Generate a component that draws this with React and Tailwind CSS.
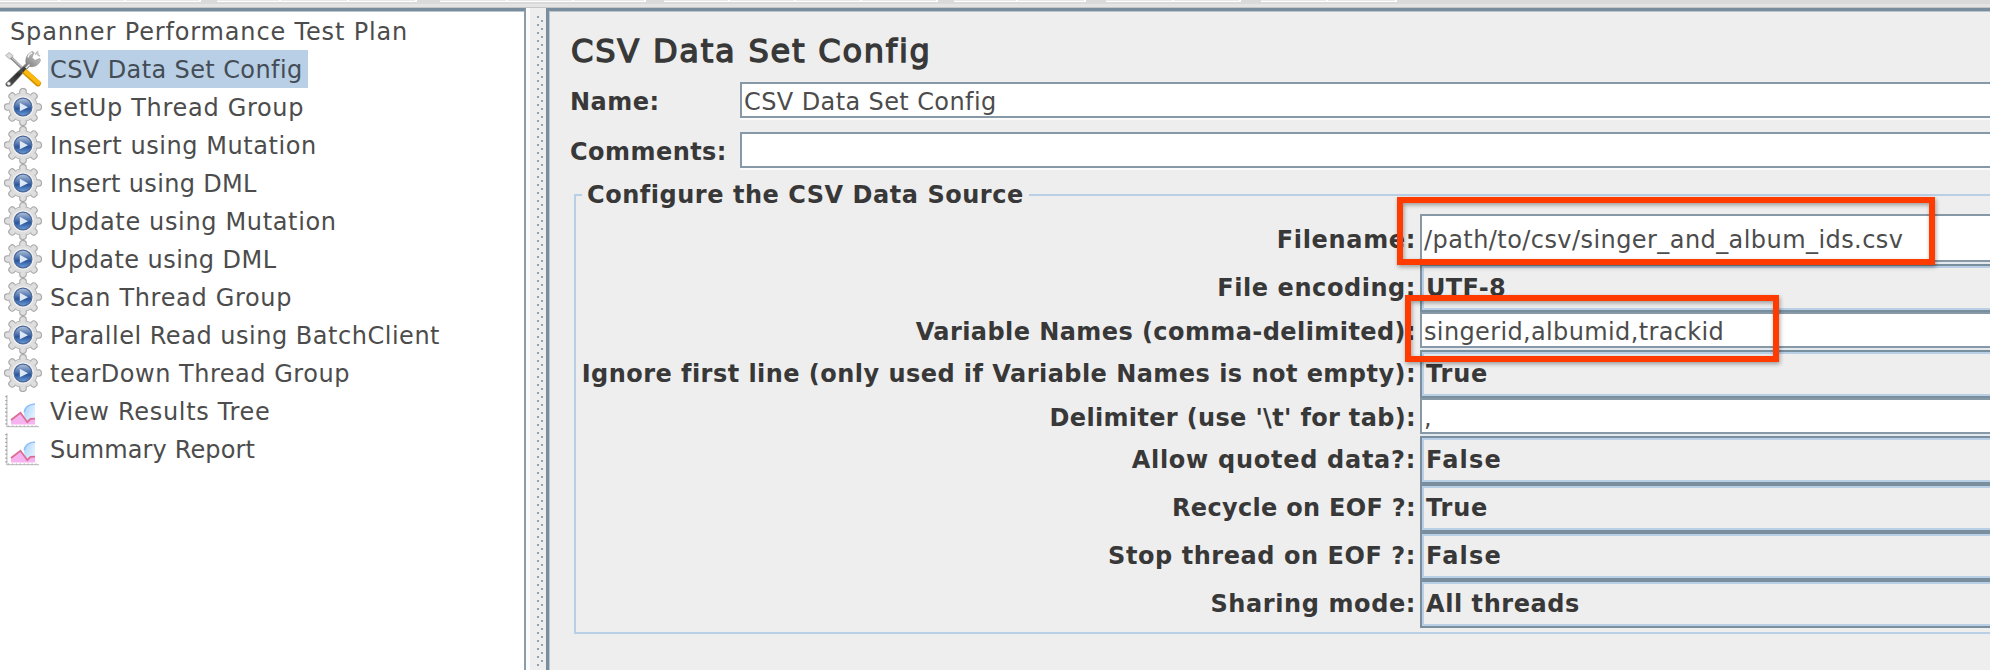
import React from 'react';

function ToolsIcon() {
  return (
    <svg width="38" height="38" viewBox="0 0 38 38" className="shrink-0">
      <defs>
        <linearGradient id="wrench" x1="0" y1="1" x2="1" y2="0">
          <stop offset="0" stopColor="#5a5a5a" />
          <stop offset="0.35" stopColor="#2e2e2e" />
          <stop offset="0.65" stopColor="#8c8c8c" />
          <stop offset="1" stopColor="#d8d8d8" />
        </linearGradient>
      </defs>
      <path d="M1.5 5.5 L5 2.5 L9 5.5 L8 8.5 L5.5 9 Z" fill="#dcdcdc" stroke="#a8a8a8" strokeWidth="0.8" />
      <path d="M7 7.5 L20 20" stroke="#8b8b8b" strokeWidth="3" />
      <path d="M7.5 7.3 L20 19.3" stroke="#e2e2e2" strokeWidth="1" />
      <path
        d="M2 33 L17 18.5 L22 13.5 C21 8 23.5 3 28.5 1.5 L30 2.5 L28 7.5 L31 10.5 L35.5 8.5 L36.5 10 C35 15 30.5 17.5 25.5 16.5 L20.5 21.5 L8 35 C5 38 0.5 36.5 2 33 Z"
        fill="url(#wrench)"
        stroke="#888"
        strokeWidth="0.6"
      />
      <path d="M24 7.5 C24.5 5 26 3.4 28 3 M25.5 14.5 L20 20" stroke="#f2f2f2" strokeWidth="1.4" fill="none" />
      <path d="M31 4.5 L33.5 2 L34 5 L36 6" stroke="#c4c4c4" strokeWidth="1.8" fill="none" />
      <circle cx="4.8" cy="33.6" r="1.9" fill="#f4f4f4" stroke="#777" strokeWidth="0.6" />
      <path d="M21.5 22.2 L34 33.4" stroke="#d69200" strokeWidth="6" strokeLinecap="round" />
      <path d="M21.8 21.6 L34.4 32.8" stroke="#fcb90d" strokeWidth="4.2" strokeLinecap="round" />
      <path d="M17.2 19.4 L20 16.8 L22.4 18.8 L19 22.4 Z" fill="#3c3c3c" />
    </svg>
  );
}

const TEETH = [0, 45, 90, 135, 180, 225, 270, 315];

function GearIcon() {
  return (
    <svg width="38" height="38" viewBox="0 0 38 38" className="shrink-0">
      <defs>
        <linearGradient id="orb" x1="0" y1="0" x2="0" y2="1">
          <stop offset="0" stopColor="#b4c3da" />
          <stop offset="0.35" stopColor="#6485b8" />
          <stop offset="0.6" stopColor="#2a569c" />
          <stop offset="1" stopColor="#6ea0dc" />
        </linearGradient>
      </defs>
      {TEETH.map((a) => (
        <rect key={a} x="15.8" y="0.6" width="6.4" height="9" rx="2.6" fill="#dedede" stroke="#a9a9a9" strokeWidth="1.2" transform={`rotate(${a} 19 19)`} />
      ))}
      <circle cx="19" cy="19" r="14.4" fill="#dcdcdc" stroke="#b0b0b0" strokeWidth="0.9" />
      {TEETH.map((a) => (
        <rect key={a} x="16.6" y="1.5" width="4.8" height="8" rx="2" fill="#dedede" transform={`rotate(${a} 19 19)`} />
      ))}
      <circle cx="19" cy="19" r="10.8" fill="#f0f0f0" />
      <circle cx="19" cy="19" r="8.9" fill="url(#orb)" stroke="#4a6898" strokeWidth="1.2" />
      <path d="M15.8 14.8 L24 19.3 L15.8 23.2 Z" fill="#dfe9f6" />
    </svg>
  );
}

function ChartIcon() {
  return (
    <svg width="38" height="38" viewBox="0 0 38 38" className="shrink-0">
      <defs>
        <linearGradient id="bubble" x1="0" y1="0" x2="1" y2="0.6">
          <stop offset="0" stopColor="#a9d2fb" />
          <stop offset="1" stopColor="#e4f2ff" />
        </linearGradient>
      </defs>
      <path d="M31 12 C25 12 20.5 16 20.2 20.5 C20 24.5 21 27.5 23.5 30 L31 26.5 Z" fill="url(#bubble)" />
      <path d="M31 12 C25 12 20.5 15.5 20.2 20.5" fill="none" stroke="#8fc0f6" strokeWidth="1.4" />
      <path d="M7 28 L16.7 20.7 L23.3 30 L26.5 27 L31 26.7 L31 32.6 L7 32.6 Z" fill="#f7b2f0" />
      <path d="M7 28 L16.5 20.7 L23.3 30.2 L26.5 26.8 L31 26.7" fill="none" stroke="#dc6d92" strokeWidth="1.8" />
      <path d="M2.9 3 V35" stroke="#b4b4b4" strokeWidth="1" />
      <path d="M2.2 4 V34" stroke="#a8a8a8" strokeWidth="2" strokeDasharray="1.3 2.6" />
      <path d="M2.5 34.7 H35" stroke="#b8b8b8" strokeWidth="1" />
      <path d="M4 34.2 H35" stroke="#b4b4b4" strokeWidth="1.6" strokeDasharray="1.3 2.6" />
    </svg>
  );
}

const TREE = [
  { icon: ToolsIcon, text: 'CSV Data Set Config', track: 'tracking-[0.4px]', selected: true },
  { icon: GearIcon, text: 'setUp Thread Group', track: 'tracking-[0.69px]' },
  { icon: GearIcon, text: 'Insert using Mutation', track: 'tracking-[0.56px]' },
  { icon: GearIcon, text: 'Insert using DML', track: 'tracking-[0.33px]' },
  { icon: GearIcon, text: 'Update using Mutation', track: 'tracking-[0.65px]' },
  { icon: GearIcon, text: 'Update using DML', track: 'tracking-[0.43px]' },
  { icon: GearIcon, text: 'Scan Thread Group', track: 'tracking-[0.68px]' },
  { icon: GearIcon, text: 'Parallel Read using BatchClient', track: 'tracking-[0.52px]' },
  { icon: GearIcon, text: 'tearDown Thread Group', track: 'tracking-[0.52px]' },
  { icon: ChartIcon, text: 'View Results Tree', track: 'tracking-[0.68px]' },
  { icon: ChartIcon, text: 'Summary Report', track: 'tracking-[0.14px]' },
];

const ROWS = [
  { label: 'Filename:', track: 'tracking-[0.66px]', value: '/path/to/csv/singer_and_album_ids.csv', kind: 'tall', vtrack: 'tracking-[0.43px]' },
  { label: 'File encoding:', track: 'tracking-[0.56px]', value: 'UTF-8', kind: 'combo', vtrack: 'tracking-[0.38px]' },
  { label: 'Variable Names (comma-delimited):', track: 'tracking-[0.42px]', value: 'singerid,albumid,trackid', kind: 'text', vtrack: 'tracking-[0.36px]' },
  { label: 'Ignore first line (only used if Variable Names is not empty):', track: 'tracking-[0.46px]', value: 'True', kind: 'combo', vtrack: 'tracking-[0.78px]' },
  { label: "Delimiter (use '\\t' for tab):", track: 'tracking-[0.34px]', value: ',', kind: 'text', vtrack: '' },
  { label: 'Allow quoted data?:', track: 'tracking-[0.72px]', value: 'False', kind: 'combo', vtrack: 'tracking-[1.2px]' },
  { label: 'Recycle on EOF ?:', track: 'tracking-[0.31px]', value: 'True', kind: 'combo', vtrack: 'tracking-[0.78px]' },
  { label: 'Stop thread on EOF ?:', track: 'tracking-[0.56px]', value: 'False', kind: 'combo', vtrack: 'tracking-[1.2px]' },
  { label: 'Sharing mode:', track: 'tracking-[0.6px]', value: 'All threads', kind: 'combo', vtrack: 'tracking-[0.56px]' },
];

const ROW_STYLE = {
  tall: 'h-[50px] leading-[48px]',
  text: 'h-[38px] leading-[36px]',
  combo: 'h-[48px] leading-[48px]',
};

function FormRow({ label, track, value, kind, vtrack }) {
  return (
    <div className={`flex ${ROW_STYLE[kind]}`}>
      <div className={`w-[844px] shrink-0 whitespace-nowrap pr-[4px] text-right font-bold text-[#383838] ${track} ${kind === 'combo' ? '' : 'pt-[2px]'}`}>
        {label}
      </div>
      {kind === 'combo' ? (
        <div className="flex-1 border-2 border-r-0 border-[#7a8f9e] bg-[#eee]">
          <div className={`h-full border-2 border-r-0 border-[#b8cfe5] pl-[2px] font-bold leading-[40px] text-[#383838] ${vtrack}`}>{value}</div>
        </div>
      ) : (
        <div className="flex flex-1 flex-col border-b-2 border-[#e4e9ed]">
          <div className={`min-h-0 flex-1 border-2 border-r-0 border-[#8799a7] bg-white pl-[2px] text-[#4c4c4c] ${vtrack}`}>{value}</div>
        </div>
      )}
    </div>
  );
}

function TopField({ label, track, value }) {
  return (
    <div className="flex h-[36px] leading-[36px]">
      <div className={`w-[170px] shrink-0 pt-[2px] font-bold text-[#383838] ${track}`}>{label}</div>
      <div className="flex-1 border-2 border-r-0 border-[#8799a7] bg-white pl-[2px] tracking-[0.4px] text-[#4c4c4c] shadow-[0_2px_0_#fafafa]">{value}</div>
    </div>
  );
}

const TOOLBAR = [
  [60, 66, 75],
  [64, 68, 68],
  [68, 66, 72],
  [66, 66, 66, 76],
  [64, 68],
  [68, 67],
  [67, 69],
];
const TOOLBAR_GAPS = ['ml-0', 'ml-[16px]', 'ml-[23px]', 'ml-[18px]', 'ml-[16px]', 'ml-[20px]', 'ml-[20px]'];

export default function App() {
  return (
    <div className="relative flex h-[670px] w-[1990px] flex-col overflow-hidden bg-[#eee] font-['DejaVu_Sans',sans-serif] text-[24px]">
      <div className="flex h-[8px] shrink-0 flex-col bg-[#e4e4e4]">
        <div className="flex h-[4px] bg-[#dadada]">
          {TOOLBAR.map((group, g) => (
            <div key={g} className={`flex h-[2px] ${TOOLBAR_GAPS[g]}`}>
              {group.map((w, i) => (
                <div key={i} className="border-b border-r-2 border-white bg-[#e9e9e9]" style={{ width: w }} />
              ))}
            </div>
          ))}
        </div>
        <div className="mt-[3px] h-px bg-[#c4c6c8]" />
      </div>

      <div className="flex flex-1">
        <div className="w-[526px] shrink-0 border-r-2 border-t-[3px] border-r-[#8b9dab] border-t-[#7a8d9c] bg-white text-[#4c4c4c] shadow-[inset_0_1px_0_#b9c6cf]">
          <div className="ml-[10px] mt-px h-[38px] whitespace-nowrap pt-px leading-[38px] tracking-[0.85px]">Spanner Performance Test Plan</div>
          {TREE.map(({ icon: Icon, text, track, selected }) => (
            <div key={text} className="flex h-[38px] pl-[4px]">
              <Icon />
              <div className={`ml-[6px] h-[38px] whitespace-nowrap pl-[2px] pt-px leading-[38px] ${selected ? 'w-[260px] bg-[#b8cfe5] text-[#444c55]' : ''}`}>
                <div className={track}>{text}</div>
              </div>
            </div>
          ))}
        </div>

        <div className="w-[20px] shrink-0 border-l-4 border-[#fbfbfb] bg-[#eee]">
          <svg width="16" height="659" className="block">
            <defs>
              <pattern id="grip" width="16" height="8" patternUnits="userSpaceOnUse">
                <rect x="7" y="0" width="2" height="2" fill="#8fa2b0" />
                <rect x="11" y="4" width="2" height="2" fill="#8fa2b0" />
              </pattern>
            </defs>
            <rect y="8" width="16" height="651" fill="url(#grip)" />
          </svg>
        </div>

        <div className="flex-1 border-l-[3px] border-t-[3px] border-[#7a8d9c] bg-[#eee] shadow-[inset_1px_1px_0_#b9c6cf]">
          <div className="flex flex-col pl-[21px] pt-[20px]">
            <h1 className="h-[40px] whitespace-nowrap pl-px text-[32px] leading-[40px] tracking-[1.79px] text-[#383838] [-webkit-text-stroke:1.4px_#383838]">
              CSV Data Set Config
            </h1>
            <div className="mt-[11px] flex flex-col gap-[14px]">
              <TopField label="Name:" track="tracking-[0.5px]" value="CSV Data Set Config" />
              <TopField label="Comments:" track="tracking-[0.45px]" value="" />
            </div>
            <fieldset className="-mr-[2px] ml-[4px] mt-[13px] h-[453px] border-2 border-[#b8cfe5]">
              <legend className="ml-[6px] h-[28px] w-[447px] whitespace-nowrap pl-[5px] font-bold leading-[28px] tracking-[0.53px] text-[#383838]">
                Configure the CSV Data Source
              </legend>
              <div className="pt-[5px]">
                {ROWS.map((row) => (
                  <FormRow key={row.label} {...row} />
                ))}
              </div>
            </fieldset>
          </div>
        </div>
      </div>

      <div className="absolute left-[1397px] top-[197px] h-[68px] w-[538px] border-[6px] border-[#ff3b00] drop-shadow-[1px_2px_2px_rgba(0,0,0,0.35)]" />
      <div className="absolute left-[1405px] top-[295px] h-[67px] w-[374px] border-[6px] border-[#ff3b00] drop-shadow-[1px_2px_2px_rgba(0,0,0,0.35)]" />
    </div>
  );
}
